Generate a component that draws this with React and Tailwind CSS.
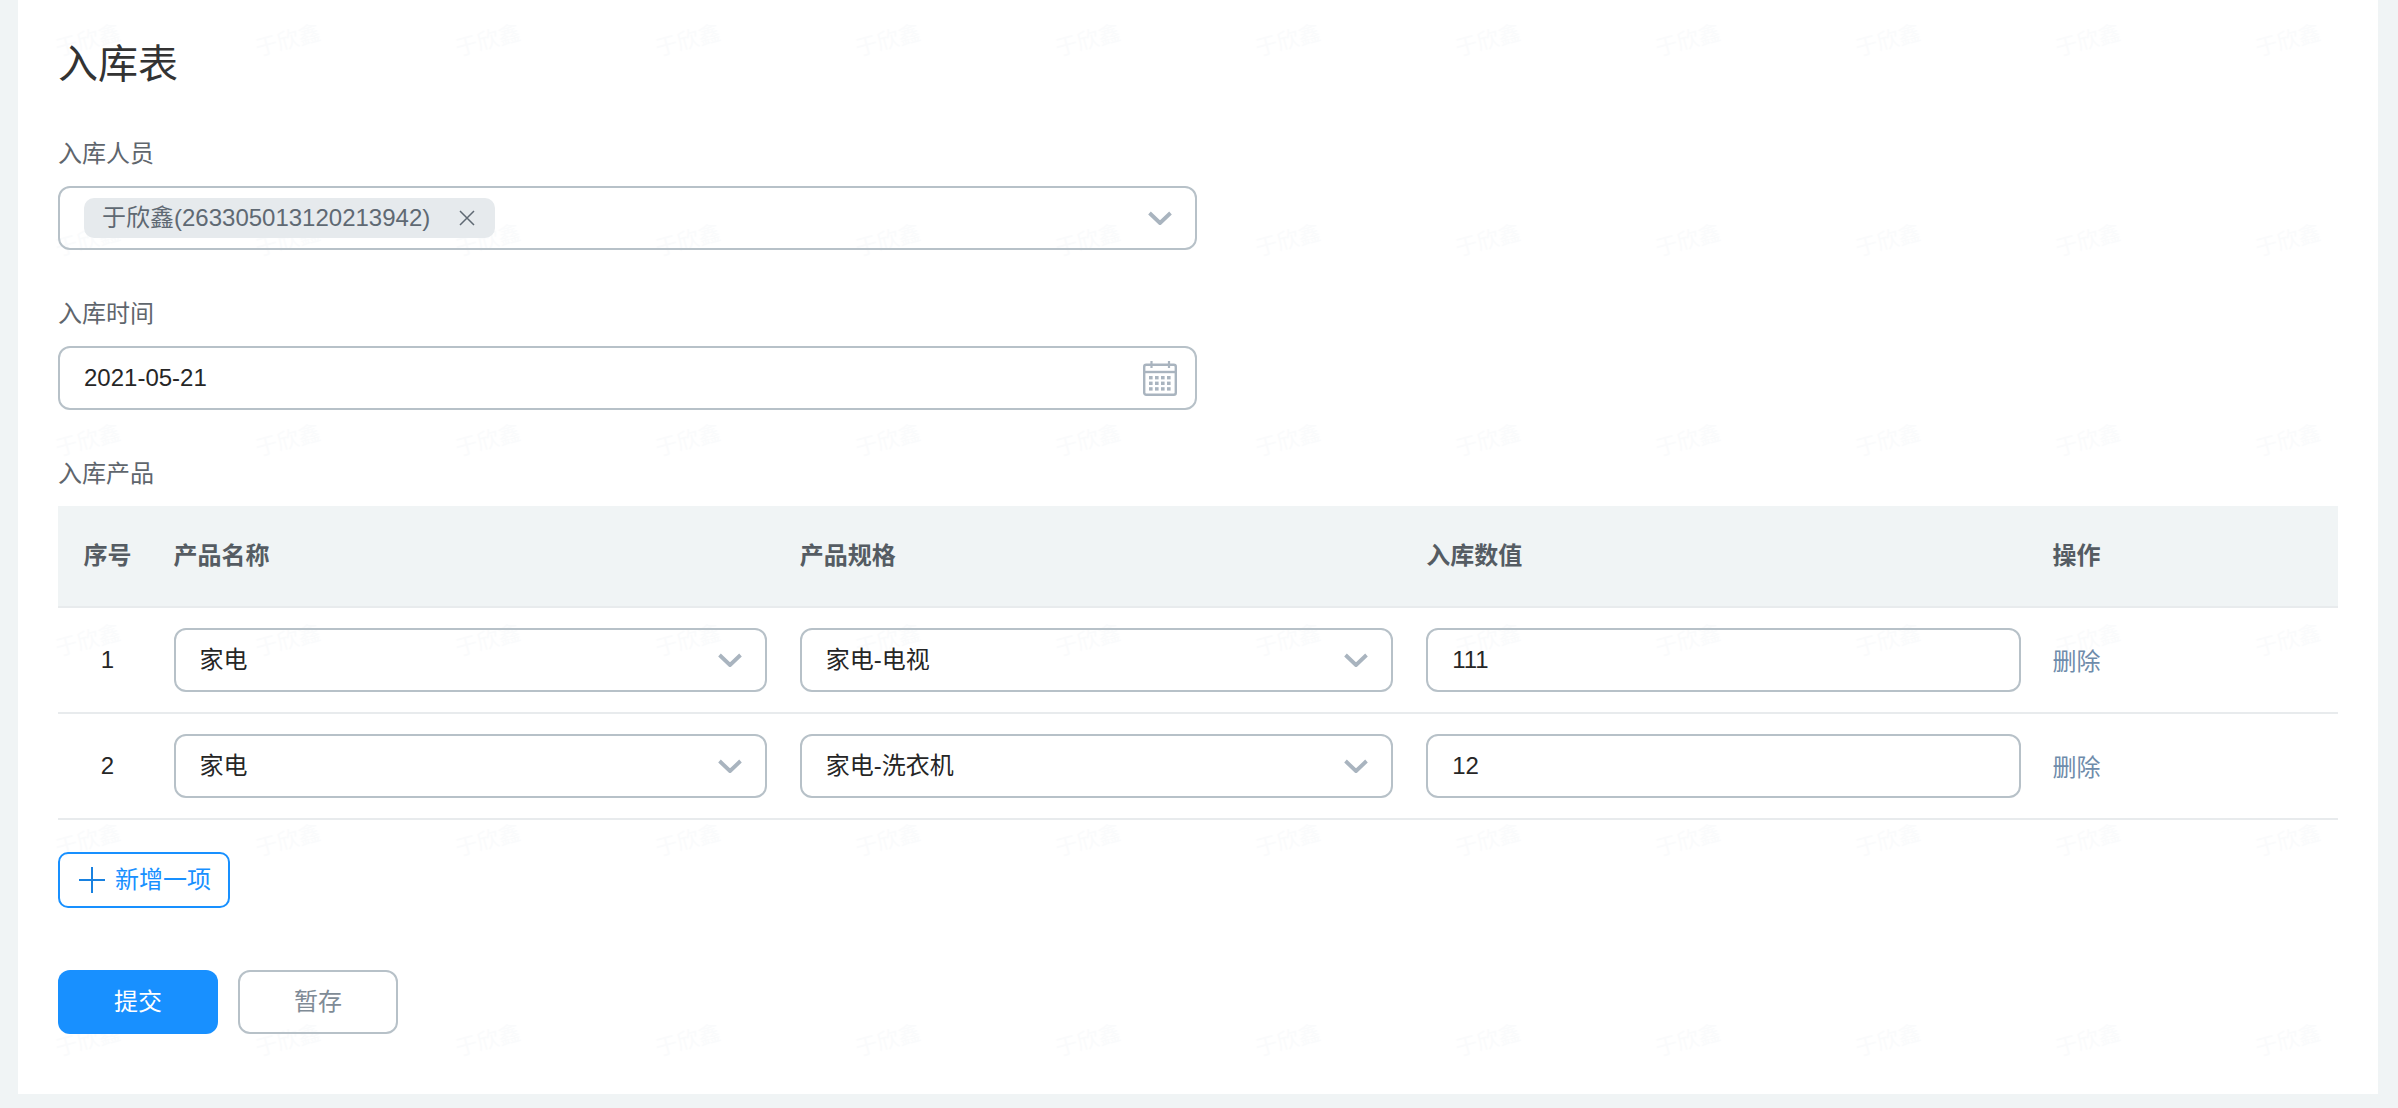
const fontStack = { fontFamily: '"Liberation Sans", "Noto Sans CJK SC", sans-serif' }

const rows = [
  { id: 1, name: '家电', spec: '家电-电视', amount: '111' },
  { id: 2, name: '家电', spec: '家电-洗衣机', amount: '12' },
]

const marks = Array.from({ length: 72 }, (_, i) => i)

function Chevron() {
  return (
    <svg width="24" height="14" viewBox="0 0 24 14" fill="none" className="shrink-0">
      <path d="M1.5 2 L12 12 L22.5 2" stroke="#a9b4bf" strokeWidth="3.8" strokeLinejoin="round" />
    </svg>
  )
}

function CalendarIcon() {
  const dots = []
  for (let r = 0; r < 3; r++) {
    for (let c = 0; c < 4; c++) {
      dots.push(<rect key={`${r}-${c}`} x={6 + c * 6} y={15 + r * 5.6} width="3.6" height="3.4" fill="#a9b4bf" />)
    }
  }
  return (
    <svg width="34" height="35" viewBox="0 0 34 35" fill="none" className="shrink-0">
      <rect x="1.2" y="3.7" width="31.6" height="30.1" rx="2" stroke="#a9b4bf" strokeWidth="2.4" />
      <path d="M1 11 H33" stroke="#a9b4bf" strokeWidth="2.4" />
      <path d="M8.5 0 V7 M26 0 V7" stroke="#a9b4bf" strokeWidth="2.2" />
      {dots}
    </svg>
  )
}

function SelectBox({ children }) {
  return (
    <div className="flex h-16 items-center justify-between rounded-xl border-2 border-[#b7c1c8] pl-[24px] pr-[23px] text-[24px] text-[#262626]">
      <span>{children}</span>
      <Chevron />
    </div>
  )
}

function Label({ children }) {
  return <div className="mb-[14px] h-9 text-[24px] leading-9 text-[#5f666d]">{children}</div>
}

export default function App() {
  return (
    <div className="h-[1108px] overflow-hidden bg-[#f0f4f5] pl-[18px]" style={fontStack}>
      <div className="relative h-[1094px] w-[2360px] overflow-hidden bg-white">
        {/* watermark */}
        <div className="pointer-events-none absolute -left-[30px] -top-[60px] flex w-[2400px] flex-wrap">
          {marks.map((i) => (
            <div key={i} className="flex h-[200px] w-[200px] items-center justify-center">
              <span className="-rotate-[15deg] text-[22px] text-[#fafbfc]">于欣鑫</span>
            </div>
          ))}
        </div>

        <div className="relative pl-10 pr-10">
          <h1 className="h-[136px] pt-[40px] text-[40px] leading-[48px] font-normal text-[#333]">入库表</h1>

          <Label>入库人员</Label>
          <div className="mb-[46px] flex h-16 w-[1139px] items-center justify-between rounded-xl border-2 border-[#b7c1c8] pl-[24px] pr-[23px]">
            <div className="flex h-10 w-[411px] items-center rounded-[10px] bg-[#e6eaed] pl-[18px] text-[24px] text-[#5f6973]">
              <span className="w-[347px]">于欣鑫(263305013120213942)</span>
              <svg width="16" height="16" viewBox="0 0 16 16" fill="none" className="ml-[10px]">
                <path d="M1 1 L15 15 M15 1 L1 15" stroke="#5f6973" strokeWidth="1.5" />
              </svg>
            </div>
            <Chevron />
          </div>

          <Label>入库时间</Label>
          <div className="mb-[46px] flex h-16 w-[1139px] items-center justify-between rounded-xl border-2 border-[#b7c1c8] pl-[24px] pr-[18px] text-[24px] text-[#262626]">
            <span>2021-05-21</span>
            <CalendarIcon />
          </div>

          <Label>入库产品</Label>
          <table className="w-full table-fixed border-collapse text-[24px]">
            <thead>
              <tr className="h-[101px] border-b-2 border-[#e8ebed] bg-[#f0f4f5] text-[#555c63]">
                <th className="w-[99px] text-center font-bold">序号</th>
                <th className="px-[16.5px] text-left font-bold">产品名称</th>
                <th className="px-[16.5px] text-left font-bold">产品规格</th>
                <th className="px-[16.5px] text-left font-bold">入库数值</th>
                <th className="w-[302px] px-[16.5px] text-left font-bold">操作</th>
              </tr>
            </thead>
            <tbody>
              {rows.map((row) => (
                <tr key={row.id} className="h-[106px] border-b-2 border-[#e8ebed] text-[#262626]">
                  <td className="text-center">{row.id}</td>
                  <td className="px-[16.5px]"><SelectBox>{row.name}</SelectBox></td>
                  <td className="px-[16.5px]"><SelectBox>{row.spec}</SelectBox></td>
                  <td className="pl-[16.5px] pr-[15px]">
                    <div className="flex h-16 items-center rounded-xl border-2 border-[#b7c1c8] pl-[24px]">{row.amount}</div>
                  </td>
                  <td className="px-[16.5px]">
                    <span className="relative top-[2px] text-[#6f8cab]">删除</span>
                  </td>
                </tr>
              ))}
            </tbody>
          </table>

          <button className="mt-[32px] flex h-14 w-[172px] items-center rounded-[10px] border-2 border-[#1890ff] pl-[19px] text-[24px] text-[#1890ff]">
            <svg width="26" height="26" viewBox="0 0 26 26" fill="none" className="mr-[10px]">
              <path d="M13 0 V26 M0 13 H26" stroke="#1881e0" strokeWidth="2" />
            </svg>
            新增一项
          </button>

          <div className="mt-[62px] flex gap-5 text-[24px]">
            <button className="h-16 w-40 rounded-xl bg-[#1890ff] text-white">提交</button>
            <button className="h-16 w-40 rounded-xl border-2 border-[#b7c1c8] text-[#7f8b96]">暂存</button>
          </div>
        </div>
      </div>
    </div>
  )
}
